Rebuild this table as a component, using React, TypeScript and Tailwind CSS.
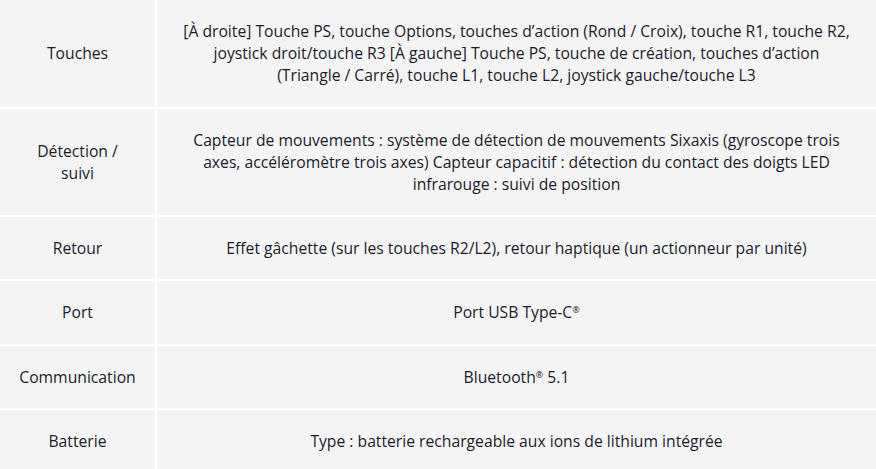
import React from 'react';

const Reg = () => <sup className="text-[9px] -top-[5px]">®</sup>;

const rows: { label: React.ReactNode; value: React.ReactNode }[] = [
  {
    label: 'Touches',
    value: (
      <>
        [À droite] Touche PS, touche Options, touches d’action (Rond / Croix), touche R1, touche R2,
        <br />
        joystick droit/touche R3 [À gauche] Touche PS, touche de création, touches d’action
        <br />
        (Triangle / Carré), touche L1, touche L2, joystick gauche/touche L3
      </>
    ),
  },
  {
    label: (
      <>
        Détection /<br />suivi
      </>
    ),
    value: (
      <>
        Capteur de mouvements : système de détection de mouvements Sixaxis (gyroscope trois
        <br />
        axes, accéléromètre trois axes) Capteur capacitif : détection du contact des doigts LED
        <br />
        infrarouge : suivi de position
      </>
    ),
  },
  {
    label: 'Retour',
    value: 'Effet gâchette (sur les touches R2/L2), retour haptique (un actionneur par unité)',
  },
  {
    label: 'Port',
    value: (
      <>
        Port USB Type-C<Reg />
      </>
    ),
  },
  {
    label: 'Communication',
    value: (
      <>
        Bluetooth<Reg /> 5.1
      </>
    ),
  },
  {
    label: 'Batterie',
    value: 'Type : batterie rechargeable aux ions de lithium intégrée',
  },
];

export default function App() {
  return (
    <div className="w-[876px] h-[469px] overflow-hidden bg-white font-['Open_Sans',sans-serif] text-[15.7px] leading-[22.2px] text-[#1b1b2b]">
      <div className="grid grid-cols-[155px_1fr] gap-[2px]">
        {rows.map((r, i) => (
          <React.Fragment key={i}>
            <div className="bg-[#f4f4f4] flex items-center justify-center text-center px-2 py-[20px]">
              <div>{r.label}</div>
            </div>
            <div className="bg-[#f4f4f4] flex items-center justify-center text-center px-[10px] py-[20px] whitespace-nowrap">
              <div>{r.value}</div>
            </div>
          </React.Fragment>
        ))}
      </div>
    </div>
  );
}
